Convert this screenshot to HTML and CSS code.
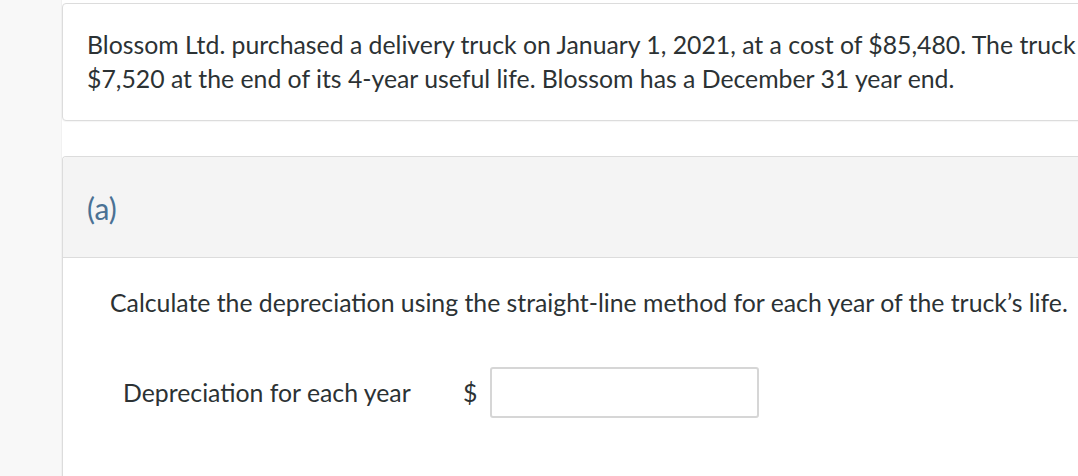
FILE: index.html
```html
<!DOCTYPE html>
<html>
<head>
<meta charset="utf-8">
<link rel="stylesheet" href="styles.css">
</head>
<body>
<div class="page">
  <div class="side"></div>
  <main class="main">
    <section class="card intro">
      <p>Blossom Ltd. purchased a delivery truck on January 1, 2021, at a cost of $85,480. The truck is expected to have a residual value of<br>$7,520 at the end of its 4-year useful life. Blossom has a December 31 year end.</p>
    </section>
    <section class="card part">
      <div class="part-head"><span class="part-label">(a)</span></div>
      <div class="part-body">
        <p class="question">Calculate the depreciation using the straight-line method for each year of the truck’s life.</p>
        <div class="answer-row">
          <span class="answer-label">Depreciation for each year</span>
          <span class="currency">$</span>
          <input class="answer-input" type="text">
        </div>
      </div>
    </section>
  </main>
</div>
</body>
</html>
```

FILE: styles.css
```css
html, body {
  margin: 0;
  padding: 0;
  overflow: hidden;
  background: #ffffff;
}
body {
  font-family: Lato, "Open Sans", sans-serif;
  color: #2c3234;
}
.page {
  display: flex;
  width: 1700px;
  min-height: 476px;
}
.side {
  width: 61px;
  flex: none;
  background: #f8f8f8;
  border-right: 1px solid #f1f1f1;
}
.main {
  flex: 1;
  padding-top: 3px;
  background: #ffffff;
}
.card {
  border: 1px solid #dcdcdc;
  border-radius: 4px;
  background: #fff;
  width: 1600px;
}
.intro {
  padding: 24px 24px 24px 24px;
  box-shadow: 0 1px 1px rgba(0,0,0,0.04);
}
.intro p {
  margin: 0;
  font-size: 24.8px;
  line-height: 34px;
  white-space: nowrap;
}
.part {
  margin-top: 35px;
  border-bottom: none;
  border-radius: 4px 4px 0 0;
}
.part-head {
  background: #f4f4f4;
  height: 100px;
  display: flex;
  align-items: center;
  padding-left: 24px;
  border-bottom: 1px solid #dcdcdc;
  border-radius: 4px 4px 0 0;
}
.part-label {
  font-size: 30px;
  color: #4a7194;
  margin-top: 2px;
}
.part-body {
  padding: 28px 0 80px 47px;
}
.question {
  margin: 0;
  font-size: 24.8px;
  line-height: 33px;
}
.answer-row {
  display: flex;
  align-items: center;
  margin-top: 48px;
  padding-left: 13px;
}
.answer-label {
  font-size: 24.8px;
  width: 340px;
}
.currency {
  font-size: 24.8px;
  width: 27px;
}
.answer-input {
  width: 269px;
  height: 51px;
  box-sizing: border-box;
  border: 2px solid #d6d6d6;
  border-radius: 3px;
  background: #fff;
  margin: 0;
  font-family: inherit;
  font-size: 20px;
}
```
